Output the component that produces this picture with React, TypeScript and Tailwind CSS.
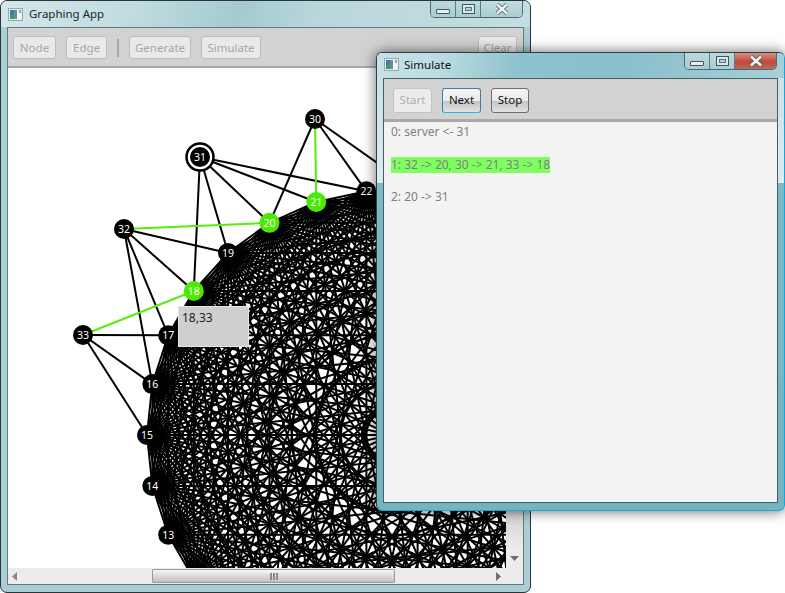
const CX = 392;
const CY = 435;
const R = 245;

type Pt = { x: number; y: number };

const ring: Pt[] = Array.from({ length: 30 }, (_, i) => ({
  x: CX + R * Math.cos((i * 12 * Math.PI) / 180),
  y: CY + R * Math.sin((i * 12 * Math.PI) / 180),
}));

const outer: Record<number, Pt> = {
  30: { x: 315, y: 119 },
  31: { x: 200, y: 157 },
  32: { x: 124, y: 229 },
  33: { x: 83, y: 335 },
};

const nodes: Record<number, Pt> = { ...ring, ...outer };

// only these ones are not behind the Simulate window
const shownNodes = [13, 14, 15, 16, 17, 18, 19, 20, 21, 22, 30, 31, 32, 33];

// edges from the outer nodes into the ring
const spokes: [number, number][] = [
  [30, 20],
  [30, 22],
  [30, 23],
  [31, 18],
  [31, 19],
  [31, 20],
  [31, 21],
  [31, 22],
  [32, 19],
  [32, 18],
  [32, 17],
  [32, 16],
  [33, 17],
  [33, 16],
  [33, 15],
];
const greenEdges: [number, number][] = [
  [32, 20],
  [30, 21],
  [33, 18],
];
const greenNodes = [18, 20, 21];

const ringEdges: [number, number][] = [];
for (let a = 0; a < 30; a++) {
  for (let b = a + 1; b < 30; b++) ringEdges.push([a, b]);
}

const font = { fontFamily: '"Noto Sans", sans-serif' };

function AppIcon() {
  return (
    <svg width="15" height="13" viewBox="0 0 15 13" className="shrink-0">
      <rect x="0.5" y="0.5" width="14" height="12" fill="#e8eef0" stroke="#93a8ae" />
      <rect x="2" y="2" width="4" height="9" fill="#3d7f9c" />
      <rect x="2" y="7" width="4" height="4" fill="#3f9a6a" />
      <rect x="6" y="2" width="3" height="9" fill="#6d8c9a" />
      <rect x="9" y="2" width="4" height="9" fill="#f6f8f8" />
      <rect x="11" y="2" width="2" height="3" fill="#8aa0a8" />
    </svg>
  );
}

function TitleButtons({ active }: { active?: boolean }) {
  return (
    <div className="absolute top-0 right-[7px] flex h-[17px] rounded-b-[5px] border border-t-0 border-[#4d6a72] overflow-hidden">
      <div className="flex w-[25px] items-end justify-center border-r border-[#5d7d85] pb-[3px] bg-[linear-gradient(#bcd8dd,#a8cdd3)]">
        <div className="h-[5px] w-[14px] rounded-[1px] border border-[#45565b] bg-[#e6eef0]" />
      </div>
      <div className="flex w-[25px] items-center justify-center border-r border-[#5d7d85] bg-[linear-gradient(#bcd8dd,#a8cdd3)]">
        <div className="flex h-[10px] w-[13px] items-center justify-center border border-[#45565b] bg-[#dce9ec]">
          <div className="h-[4px] w-[7px] border border-[#5c7077] bg-[#b6d2d8]" />
        </div>
      </div>
      <div
        className={
          active
            ? "flex w-[41px] items-center justify-center bg-[linear-gradient(#d88f80,#c2493a_55%,#b9685c)]"
            : "flex w-[41px] items-center justify-center bg-[linear-gradient(#c4dde1,#a8cdd3)]"
        }
      >
        <svg width="16" height="12" viewBox="0 0 16 12">
          <path d="M3 1.5 L13 10.5 M13 1.5 L3 10.5" stroke="#4a5a60" strokeWidth="4.2" />
          <path d="M3 1.5 L13 10.5 M13 1.5 L3 10.5" stroke="#eef3f4" strokeWidth="2.6" />
        </svg>
      </div>
    </div>
  );
}

function ToolButton({ label, w }: { label: string; w: string }) {
  return (
    <div
      className={`flex h-[23px] ${w} items-center justify-center rounded-[3px] border border-[#bdbdbd] bg-[#e9e9e9] text-[11.5px] text-[#a6a6a6]`}
    >
      {label}
    </div>
  );
}

function SimButton({ label, w, focus }: { label: string; w: string; focus?: boolean }) {
  return (
    <div
      className={`flex h-[25px] ${w} items-center justify-center rounded-[3px] border text-[11.5px] text-[#111] bg-[linear-gradient(#f4f4f4,#ececec_50%,#c4c4c4_52%,#e2e2e2)] ${
        focus ? "border-[#3d7f9f] border-b-[#1fb8ee]" : "border-[#6e6e6e]"
      }`}
    >
      {label}
    </div>
  );
}

function Graph() {
  return (
    <svg width="498" height="500" viewBox="8 68 498 500" className="block bg-white">
      {ringEdges.map(([a, b]) => (
        <line
          key={`${a}-${b}`}
          x1={ring[a].x}
          y1={ring[a].y}
          x2={ring[b].x}
          y2={ring[b].y}
          stroke="#000"
          strokeWidth="2"
        />
      ))}
      {spokes.map(([a, b]) => (
        <line
          key={`${a}-${b}`}
          x1={nodes[a].x}
          y1={nodes[a].y}
          x2={nodes[b].x}
          y2={nodes[b].y}
          stroke="#000"
          strokeWidth="2"
        />
      ))}
      {greenEdges.map(([a, b]) => (
        <line
          key={`${a}-${b}`}
          x1={nodes[a].x}
          y1={nodes[a].y}
          x2={nodes[b].x}
          y2={nodes[b].y}
          stroke="#55ee0c"
          strokeWidth="2"
        />
      ))}
      <circle cx={outer[31].x} cy={outer[31].y} r="13.5" fill="#fff" stroke="#000" strokeWidth="2.5" />
      {shownNodes.map((id) => {
        const p = nodes[id];
        const on = greenNodes.includes(id);
        return (
          <g key={id}>
            <circle cx={p.x} cy={p.y} r="10" fill={on ? "#4be800" : "#000"} />
            <text
              x={p.x}
              y={p.y + 4}
              textAnchor="middle"
              fill="#fff"
              fontSize="10.5"
              style={font}
            >
              {id}
            </text>
          </g>
        );
      })}
    </svg>
  );
}

export default function App() {
  return (
    <div className="relative h-[593px] w-[785px] overflow-hidden bg-white" style={font}>
      {/* main window */}
      <div className="absolute left-0 top-0 flex h-[593px] w-[531px] flex-col rounded-[7px] border border-[#2b3538] px-[6px] pb-[7px] bg-[#a9ced4]">
        <div className="relative -mx-[6px] flex h-[26px] shrink-0 items-center gap-[6px] rounded-t-[6px] pl-[7px] text-[11.5px] text-[#20282a] bg-[linear-gradient(100deg,#d4e6e9,#c0dce0_25%,#a3cbd1_45%,#b8d7dc_60%,#c3dee2)]">
          <AppIcon />
          <span>Graphing App</span>
          <TitleButtons />
        </div>
        <div className="flex min-h-0 flex-1 flex-col border border-[#64797e] bg-white">
          <div className="flex h-[40px] shrink-0 items-center gap-[10px] border-b-2 border-[#a9a9a9] bg-[#d2d2d2] pl-[5px] pr-[6px] pt-[1px]">
            <ToolButton label="Node" w="w-[43px]" />
            <ToolButton label="Edge" w="w-[41px]" />
            <div className="h-[18px] w-[2px] bg-[#a8a8a8]" />
            <ToolButton label="Generate" w="w-[62px]" />
            <ToolButton label="Simulate" w="w-[60px]" />
            <div className="ml-auto">
              <ToolButton label="Clear" w="w-[39px]" />
            </div>
          </div>
          <div className="flex min-h-0 flex-1">
            <div className="relative h-[500px] w-[498px] overflow-hidden">
              <Graph />
              <div className="absolute left-[170px] top-[238px] h-[41px] w-[71px] border border-[#e6e6e6] bg-[#cfcfcf] pl-[3px] pt-[3px] text-[12px] leading-[16px] text-[#222]">
                18,33
              </div>
            </div>
            <div className="flex w-[17px] flex-col items-center justify-end bg-[linear-gradient(#c9c9c9,#cfcfcf_88%,#ececec_96%)] pb-[7px]">
              <svg width="9" height="5" viewBox="0 0 9 5">
                <path d="M0 0 H9 L4.5 5 Z" fill="#6f6f6f" />
              </svg>
            </div>
          </div>
          <div className="relative flex h-[16px] shrink-0 items-center justify-between bg-[#ececec] pl-[4px] pr-[22px]">
            <svg width="5" height="9" viewBox="0 0 5 9">
              <path d="M5 0 V9 L0 4.5 Z" fill="#8a8a8a" />
            </svg>
            <div className="absolute left-[144px] top-[1px] flex h-[14px] w-[243px] items-center justify-center rounded-[1px] border border-[#9a9a9a] bg-[linear-gradient(#f5f5f5,#dedede_45%,#c0c0c0)]">
              <div className="flex gap-[1px]">
                <div className="h-[7px] w-[2px] bg-[#8a8a8a]" />
                <div className="h-[7px] w-[2px] bg-[#8a8a8a]" />
                <div className="h-[7px] w-[2px] bg-[#8a8a8a]" />
              </div>
            </div>
            <svg width="5" height="9" viewBox="0 0 5 9">
              <path d="M0 0 V9 L5 4.5 Z" fill="#6f6f6f" />
            </svg>
          </div>
        </div>
      </div>

      {/* simulate window */}
      <div className="absolute left-[376px] top-[52px] flex h-[459px] w-[409px] flex-col rounded-[6px] border border-[#2a3f46] border-r-[#14a6e0] border-b-[#1fa6c9] px-[6px] pb-[7px] shadow-[0_0_14px_rgba(0,0,0,0.6)] bg-[linear-gradient(#c4dfe4_0,#dcecef_130px,#7cb9c6_130px,#74b4c1)]">
        <div className="relative -mx-[6px] flex h-[25px] shrink-0 items-center gap-[5px] rounded-t-[5px] pb-[2px] pl-[7px] text-[11.5px] text-[#111] bg-[linear-gradient(100deg,#c8e1e6,#bcdde2_15%,#8ec2cd_35%,#8abfcb_60%,#a5d0d8)]">
          <AppIcon />
          <span>Simulate</span>
          <TitleButtons active />
        </div>
        <div className="flex min-h-0 flex-1 flex-col border border-[#4a5d62] bg-[#f3f3f3]">
          <div className="flex h-[43px] shrink-0 items-center gap-[10px] border-b-[3px] border-[#a9a9a9] bg-[#d2d2d2] pl-[9px] pt-[2px]">
            <div className="flex h-[25px] w-[39px] items-center justify-center rounded-[3px] border border-[#c4c4c4] bg-[#ececec] text-[11.5px] text-[#b0b0b0]">
              Start
            </div>
            <SimButton label="Next" w="w-[39px]" focus />
            <SimButton label="Stop" w="w-[38px]" />
          </div>
          <div className="flex flex-col items-start pl-[7px] pt-[2px] text-[12px] leading-[16px] text-[#808080]">
            <div>0: server &lt;- 31</div>
            <div className="mt-[17px] bg-[#7fff5f]">1: 32 -&gt; 20, 30 -&gt; 21, 33 -&gt; 18</div>
            <div className="mt-[16px]">2: 20 -&gt; 31</div>
          </div>
        </div>
      </div>
    </div>
  );
}
